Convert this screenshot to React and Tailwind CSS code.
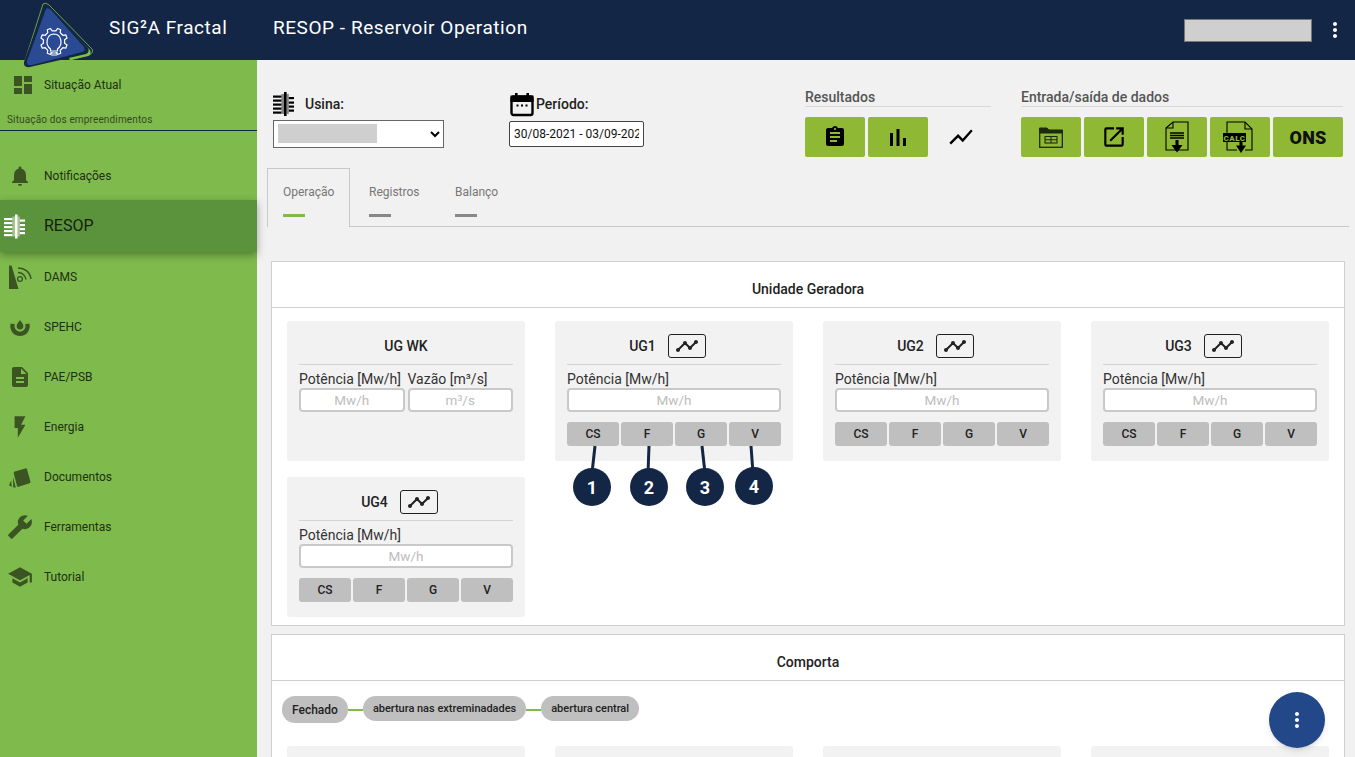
import React from 'react';
import {
  MdDashboard,
  MdNotifications,
  MdDescription,
  MdFlashOn,
  MdBuild,
  MdSchool,
  MdAssignment,
  MdShowChart,
  MdTimeline,
  MdOpenInNew,
  MdMoreVert,
} from 'react-icons/md';

function TurbineIcon({ className }) {
  return (
    <svg viewBox="0 0 24 24" className={className} fill="currentColor">
      <rect x="11" y="0" width="2.6" height="24" />
      <rect x="8.4" y="2" width="2.6" height="20" opacity="0.45" />
      <rect x="13.6" y="2" width="2.2" height="20" opacity="0.45" />
      <rect x="0" y="3.5" width="8.4" height="2.2" />
      <rect x="0" y="7.5" width="8.4" height="2.2" />
      <rect x="0" y="11.5" width="8.4" height="2.2" />
      <rect x="0" y="15.5" width="8.4" height="2.2" />
      <rect x="0" y="19.5" width="8.4" height="2.2" />
      <rect x="15.8" y="5" width="5.2" height="2.2" />
      <rect x="15.8" y="9.5" width="5.2" height="2.2" />
      <rect x="15.8" y="13.5" width="5.2" height="2.2" />
      <rect x="15.8" y="17.5" width="5.2" height="2.2" />
    </svg>
  );
}

function DamsIcon({ className }) {
  return (
    <svg viewBox="0 0 24 24" className={className}>
      <path d="M1 0.5 L3.5 0.5 L10.5 24 L1 24 Z" fill="currentColor" />
      <circle cx="12" cy="14" r="2.4" fill="none" stroke="currentColor" strokeWidth="1.3" />
      <path d="M10 7.5 A8 8 0 0 1 18 14.5" fill="none" stroke="currentColor" strokeWidth="1.5" />
      <path d="M10 3 A12.5 12.5 0 0 1 23 14" fill="none" stroke="currentColor" strokeWidth="1.5" />
    </svg>
  );
}

function SpehcIcon({ className }) {
  return (
    <svg viewBox="0 0 20 17" className={className} fill="currentColor">
      <path d="M10 0 C11.2 2 13.4 3.8 13.4 6 A3.4 3.4 0 0 1 6.6 6 C6.6 3.8 8.8 2 10 0 Z" />
      <path d="M0.7 3.6 A9.7 9.7 0 1 0 19.3 3.6 L15 4.2 A5.4 5.4 0 1 1 5 4.2 Z" />
    </svg>
  );
}

function DocumentosIcon({ className }) {
  return (
    <svg viewBox="0 0 22 20" className={className} fill="currentColor">
      <path d="M5.8 3.6 L16.4 0.4 Q17.6 0.1 18 1.2 L21.4 13.6 Q21.7 14.8 20.6 15.2 L9.6 18.8 Q8.4 19.1 8 18 L4.8 5.2 Q4.6 4 5.8 3.6 Z" />
      <path d="M4 9 L6.8 19.4 L4.2 19.4 Z" />
      <path d="M2.2 12.5 L2.8 19 L0 17.2 Z" />
    </svg>
  );
}

function CalendarIcon({ className }) {
  return (
    <svg viewBox="0 0 24 24" className={className} fill="none" stroke="currentColor">
      <rect x="1.5" y="4" width="21" height="18.5" rx="2" strokeWidth="2.4" />
      <rect x="1.5" y="4" width="21" height="4.5" fill="currentColor" strokeWidth="2" />
      <rect x="5" y="0.5" width="2.6" height="4" fill="currentColor" stroke="none" />
      <rect x="16.4" y="0.5" width="2.6" height="4" fill="currentColor" stroke="none" />
      <rect x="6.5" y="12" width="2" height="2" fill="currentColor" stroke="none" />
      <rect x="11" y="12" width="2" height="2" fill="currentColor" stroke="none" />
      <rect x="15.5" y="12" width="2" height="2" fill="currentColor" stroke="none" />
    </svg>
  );
}

function BarsIcon() {
  return (
    <svg viewBox="0 0 16 17" className="w-[16px] h-[17px] text-black" fill="currentColor">
      <rect x="0" y="4" width="3" height="13" />
      <rect x="6.5" y="0" width="3" height="17" />
      <rect x="13" y="9" width="3" height="8" />
    </svg>
  );
}

function TableFolderIcon() {
  return (
    <svg viewBox="0 0 24 21" className="w-[24px] h-[21px] text-[#1d2b0c]" fill="none" stroke="currentColor">
      <path d="M0.5 4 V1 H8 L10 3 H23.5 V6 H0.5 Z" fill="currentColor" />
      <rect x="0.7" y="5" width="22.6" height="15.3" strokeWidth="1.3" />
      <rect x="6" y="9.5" width="12" height="6.5" strokeWidth="1.1" />
      <path d="M12 9.5 V16 M6 12.7 H18" strokeWidth="1.1" />
    </svg>
  );
}

function FileDownIcon() {
  return (
    <svg viewBox="0 0 24 36" className="w-[24px] h-[36px] text-black" fill="none" stroke="currentColor">
      <path d="M1 9 L8 3 H23 V31 H1 Z" strokeWidth="1.1" />
      <path d="M1 9 H8 V3" strokeWidth="1.1" />
      <path d="M5 14 H19 M5 16.5 H19 M5 19 H19" strokeWidth="1.5" />
      <path d="M12 21 V28" strokeWidth="3" />
      <path d="M6.5 26 H17.5 L12 33.5 Z" fill="currentColor" stroke="none" />
    </svg>
  );
}

function CalcFileIcon() {
  return (
    <svg viewBox="0 0 34 36" className="w-[34px] h-[36px] text-black" fill="none" stroke="currentColor">
      <path d="M4 14 V3 H22 L29 10 V31 H22 M14 31 H4 V23" strokeWidth="1.1" />
      <path d="M22 3 V10 H29" strokeWidth="1.1" />
      <rect x="0" y="14" width="23" height="9" fill="currentColor" stroke="none" />
      <text x="11.5" y="21.6" textAnchor="middle" fontSize="8" fontWeight="900" letterSpacing="0.5" fill="#8fb935" stroke="none" fontFamily="Roboto, sans-serif">CALC</text>
      <path d="M18 23 V28" strokeWidth="3" />
      <path d="M13 26.5 H23 L18 34 Z" fill="currentColor" stroke="none" />
    </svg>
  );
}

// gear outline with 8 teeth, left open at the bottom where the bulb stem sits
function gearPath(cx, cy, outer, inner) {
  const teeth = 8;
  const points = [];
  for (let i = 0; i < teeth; i++) {
    const a = ((i + 0.5) / teeth) * Math.PI * 2 + Math.PI / 2;
    const step = (Math.PI * 2) / teeth;
    [
      [inner, a - step * 0.28],
      [outer, a - step * 0.16],
      [outer, a + step * 0.16],
      [inner, a + step * 0.28],
    ].forEach(([r, t]) => {
      points.push([cx + r * Math.cos(t), cy + r * Math.sin(t)]);
    });
  }
  return points.map((p, i) => `${i === 0 ? 'M' : 'L'}${p[0].toFixed(2)} ${p[1].toFixed(2)}`).join(' ');
}

function Logo() {
  return (
    <svg viewBox="0 0 100 76" className="absolute left-0 top-0 w-[100px] h-[76px] z-20" fill="none">
      <path d="M43 4 Q46 2 49 5 L92 49 Q94 53 89 55 L28 71 Q23 72 23 67 Z" stroke="#7fc241" strokeWidth="0.8" />
      <path d="M47 8 L90 50 Q92 54 88 56 L70 60 Z" fill="#7fc241" />
      <path d="M44 7 Q47 5 50 8 L88 48 Q90 52 86 54 L30 67 Q23 68 24 62 Z" fill="#132646" />
      <path d="M46 9 Q48 7 51 10 L84 47 Q86 51 82 52 L32 65 Q26 66 27 61 Z" fill="#2a4b94" />
      <path d={gearPath(54, 41.5, 13.5, 10.8)} stroke="#fff" strokeWidth="1.2" strokeLinejoin="round" />
      <path d="M50.5 49 C45 45 46 34.5 54 34 C62 34.5 63 45 57.5 49 V51 H50.5 Z" fill="#2a4b94" stroke="#fff" strokeWidth="1.2" />
      <path d="M50 53 H58 M51 55 H57" stroke="#fff" strokeWidth="1.2" />
    </svg>
  );
}

const navItems = [
  { label: 'Notificações', icon: <MdNotifications className="w-[24px] h-[24px]" /> },
  { label: 'RESOP', icon: <TurbineIcon className="w-[24px] h-[25px] text-white" />, active: true },
  { label: 'DAMS', icon: <DamsIcon className="w-[24px] h-[24px]" /> },
  { label: 'SPEHC', icon: <SpehcIcon className="w-[20px] h-[17px] mt-[3px]" /> },
  { label: 'PAE/PSB', icon: <MdDescription className="w-[24px] h-[24px]" /> },
  { label: 'Energia', icon: <MdFlashOn className="w-[26px] h-[26px]" /> },
  { label: 'Documentos', icon: <DocumentosIcon className="w-[22px] h-[20px] mt-[2px]" /> },
  { label: 'Ferramentas', icon: <MdBuild className="w-[26px] h-[26px] -scale-x-100" /> },
  { label: 'Tutorial', icon: <MdSchool className="w-[26px] h-[26px]" /> },
];

function Sidebar() {
  return (
    <aside className="w-[257px] shrink-0 bg-[#7fba4d] text-[#1e3010]">
      <div className="h-[50px] flex items-center">
        <span className="w-[44px] flex justify-center pl-[2px] text-[#3a5522]">
          <MdDashboard className="w-[24px] h-[24px]" />
        </span>
        <span className="text-[12px]">Situação Atual</span>
      </div>
      <div className="h-[21px] pl-[7px] pt-[2px] text-[10px] tracking-[0.15px] text-[#33491f] border-b border-[#132646]">
        Situação dos empreendimentos
      </div>
      <nav className="mt-[20px]">
        {navItems.map((item) => (
          <a
            key={item.label}
            href="#"
            className={
              item.active
                ? 'h-[52px] -mt-px relative flex items-center bg-[#5b933c] shadow-[0_3px_8px_rgba(0,0,0,0.35)]'
                : 'h-[50px] flex items-center'
            }
          >
            <span className={item.active ? 'w-[44px] flex justify-center -ml-[6px] mr-[6px]' : 'w-[38px] mr-[6px] flex justify-center pl-[2px] text-[#3a5522]'}>
              {item.icon}
            </span>
            <span className={item.active ? 'text-[16px] text-[#14210a]' : 'text-[12px]'}>{item.label}</span>
          </a>
        ))}
      </nav>
    </aside>
  );
}

function ToolButton({ children, wide }) {
  return (
    <button className={`h-[40px] ${wide ? 'w-[70px]' : 'w-[60px]'} rounded-[2px] bg-[#8fb935] flex items-center justify-center text-black`}>
      {children}
    </button>
  );
}

function Toolbar() {
  return (
    <div className="flex ml-[16px] pt-[30px] h-[108px]">
      <div className="w-[171px]">
        <div className="h-[24px] mt-[2px] flex items-center text-[14px] font-medium text-[#222]">
          <TurbineIcon className="w-[24px] h-[24px] text-black mr-[8px]" />
          Usina:
        </div>
        <div className="relative mt-[4px]">
          <select className="w-full h-[28px] bg-white border border-[#666] text-[13px] pl-1">
            <option></option>
          </select>
          <div className="absolute left-[5px] top-[4px] w-[99px] h-[19px] bg-[#cfcfcf]"></div>
        </div>
      </div>
      <div className="ml-[65px] w-[135px]">
        <div className="h-[24px] mt-[2px] flex items-center text-[14px] font-medium text-[#222]">
          <CalendarIcon className="w-[24px] h-[25px] text-black mr-[2px] ml-px" />
          Período:
        </div>
        <input
          readOnly
          value="30/08-2021 - 03/09-2021"
          className="mt-[5px] w-full h-[26px] bg-white border border-[#444] rounded-[2px] text-[12px] pl-[4px] pr-[4px] text-[#111]"
        />
      </div>
      <div className="ml-[161px] w-[186px] -mt-[2px]">
        <div className="h-[19px] pt-[2px] text-[14px] font-medium text-[#555] border-b border-[#d8d8d8] leading-[15px]">Resultados</div>
        <div className="flex gap-[3px] mt-[10px]">
          <ToolButton><MdAssignment className="w-[24px] h-[24px]" /></ToolButton>
          <ToolButton><BarsIcon /></ToolButton>
          <button className="h-[40px] w-[60px] flex items-center justify-center text-black">
            <MdShowChart className="w-[28px] h-[28px]" />
          </button>
        </div>
      </div>
      <div className="ml-[30px] w-[322px] -mt-[2px]">
        <div className="h-[19px] pt-[2px] text-[14px] font-medium text-[#555] border-b border-[#d8d8d8] leading-[15px]">Entrada/saída de dados</div>
        <div className="flex gap-[3px] mt-[10px]">
          <ToolButton><TableFolderIcon /></ToolButton>
          <ToolButton><MdOpenInNew className="w-[26px] h-[26px]" /></ToolButton>
          <ToolButton><FileDownIcon /></ToolButton>
          <ToolButton><CalcFileIcon /></ToolButton>
          <ToolButton wide><span className="text-[18px] font-black tracking-[0.2px] text-[#111]">ONS</span></ToolButton>
        </div>
      </div>
    </div>
  );
}

function Tabs() {
  const tabs = ['Operação', 'Registros', 'Balanço'];
  return (
    <div className="ml-[10px] mr-[6px] h-[59px] flex border-b border-[#c8c8c8]">
      {tabs.map((tab, i) => (
        <div
          key={tab}
          className={
            i === 0
              ? 'w-[83px] h-[59px] pl-[15px] pt-[16px] border border-b-0 border-[#c8c8c8] bg-[#f1f1f1] relative'
              : i === 1
              ? 'w-[105px] h-[59px] pl-[19px] pt-[17px]'
              : 'w-[66px] h-[59px] pt-[17px]'
          }
        >
          <div className="text-[12px] leading-[14px] text-[#777]">{tab}</div>
          <div className={`w-[22px] h-[3px] mt-[15px] ${i === 0 ? 'bg-[#7fba4d]' : 'bg-[#888]'}`}></div>
        </div>
      ))}
    </div>
  );
}

function Field({ label, placeholder }) {
  return (
    <div className="flex-1 min-w-0">
      <div className="text-[14px] leading-[16px] text-[#333] whitespace-nowrap">{label}</div>
      <input
        placeholder={placeholder}
        className="mt-[1px] w-full h-[24px] bg-white border-2 border-[#c9c9c9] rounded-[4px] text-center text-[13.5px] placeholder:text-[#bdbdbd]"
      />
    </div>
  );
}

function UgCard({ name, big, chart = true, children }) {
  return (
    <div className="relative h-[140px] rounded-[3px] bg-[#f2f2f2] px-[12px]">
      <div className={`h-[44px] pt-[8px] flex items-center justify-center gap-[12px] border-b border-[#d4d4d4] text-[14px] font-medium text-[#222] ${chart ? 'pr-[13px]' : ''}`}>
        <span>{name}</span>
        {chart && (
          <button className="w-[38px] h-[24px] -mt-[2px] border border-[#222] rounded-[3px] flex items-center justify-center text-[#222]">
            <MdTimeline className="w-[24px] h-[24px]" />
          </button>
        )}
      </div>
      <div className="flex gap-[3px] mt-[6px]">
        <Field label="Potência [Mw/h]" placeholder="Mw/h" />
        {big && <Field label="Vazão [m³/s]" placeholder="m³/s" />}
      </div>
      {!big && (
        <div className="flex gap-[2px] mt-[10px]">
          {['CS', 'F', 'G', 'V'].map((b) => (
            <button key={b} className="flex-1 h-[24px] rounded-[3px] bg-[#bfbfbf] text-[12px] font-medium text-[#222]">
              {b}
            </button>
          ))}
        </div>
      )}
      {children}
    </div>
  );
}

function Markers() {
  const circles = [
    { n: 1, cls: 'left-[18px] top-[147px]' },
    { n: 2, cls: 'left-[75px] top-[147px]' },
    { n: 3, cls: 'left-[131px] top-[147px]' },
    { n: 4, cls: 'left-[180px] top-[146px]' },
  ];
  return (
    <>
      <svg className="absolute left-0 top-[120px] w-[238px] h-[40px] overflow-visible" viewBox="0 0 238 40" fill="none" stroke="#132646" strokeWidth="3">
        <path d="M40 5 L37 32" />
        <path d="M94 5 L93 32" />
        <path d="M147 5 L150 32" />
        <path d="M196 5 L198 32" />
      </svg>
      {circles.map((c) => (
        <div
          key={c.n}
          className={`absolute ${c.cls} w-[38px] h-[38px] rounded-full bg-[#132646] text-white text-[18px] font-bold flex items-center justify-center`}
        >
          {c.n}
        </div>
      ))}
    </>
  );
}

function Chip({ children, tall }) {
  return (
    <span
      className={
        tall
          ? 'h-[27px] px-[10px] rounded-[13px] bg-[#bfbfbf] flex items-center text-[12px] font-medium text-[#222]'
          : 'h-[25px] pt-px px-[10px] rounded-[13px] bg-[#bfbfbf] flex items-center text-[11px] font-medium tracking-[-0.02px] text-[#222]'
      }
    >
      {children}
    </span>
  );
}

function Panels() {
  return (
    <div className="ml-[14px] mr-[10px] mt-[34px] flex flex-col gap-[8px]">
      <section className="h-[365px] bg-white border border-[#cfcfcf]">
        <h3 className="h-[46px] flex items-center justify-center pt-[9px] text-[14px] font-medium text-[#222] border-b border-[#cfcfcf]">
          Unidade Geradora
        </h3>
        <div className="grid grid-cols-[238px_238px_238px_238px] gap-x-[30px] gap-y-[16px] pl-[15px] pt-[13px]">
          <UgCard name="UG WK" big chart={false} />
          <UgCard name="UG1"><Markers /></UgCard>
          <UgCard name="UG2" />
          <UgCard name="UG3" />
          <UgCard name="UG4" />
        </div>
      </section>
      <section className="bg-white border border-[#cfcfcf] h-[200px]">
        <h3 className="h-[46px] flex items-center justify-center pt-[9px] text-[14px] font-medium text-[#222] border-b border-[#cfcfcf]">
          Comporta
        </h3>
        <div className="flex items-start pl-[10px] pt-[15px]">
          <Chip tall>Fechado</Chip>
          <span className="w-[15px] h-[2px] mt-[13px] bg-[#7fba4d]"></span>
          <Chip>abertura nas extreminadades</Chip>
          <span className="w-[15px] h-[2px] mt-[13px] bg-[#7fba4d]"></span>
          <Chip>abertura central</Chip>
        </div>
        <div className="grid grid-cols-[238px_238px_238px_238px] gap-x-[30px] pl-[15px] pt-[23px]">
          <div className="h-[140px] rounded-[3px] bg-[#f2f2f2]"></div>
          <div className="h-[140px] rounded-[3px] bg-[#f2f2f2]"></div>
          <div className="h-[140px] rounded-[3px] bg-[#f2f2f2]"></div>
          <div className="h-[140px] rounded-[3px] bg-[#f2f2f2]"></div>
        </div>
      </section>
    </div>
  );
}

export default function App() {
  return (
    <div className="relative h-screen overflow-hidden flex flex-col bg-[#f1f1f1] font-['Roboto',sans-serif]">
      <Logo />
      <header className="h-[60px] shrink-0 bg-[#132646] flex items-center text-white">
        <span className="ml-[109px] w-[164px] pb-[4px] text-[19px] tracking-[0.55px]">SIG²A Fractal</span>
        <span className="pb-[4px] text-[19px] tracking-[0.55px]">RESOP - Reservoir Operation</span>
        <div className="ml-auto w-[128px] h-[23px] bg-[#cfcfcf] border border-[#777]"></div>
        <MdMoreVert className="w-[24px] h-[24px] ml-[11px] mr-[8px]" />
      </header>
      <div className="flex flex-1 min-h-0">
        <Sidebar />
        <main className="flex-1 min-w-0 overflow-hidden">
          <Toolbar />
          <Tabs />
          <Panels />
        </main>
      </div>
      <button className="fixed right-[30px] bottom-[9px] w-[56px] h-[56px] rounded-full bg-[#23488a] text-white flex items-center justify-center shadow-md">
        <MdMoreVert className="w-[24px] h-[24px]" />
      </button>
    </div>
  );
}
